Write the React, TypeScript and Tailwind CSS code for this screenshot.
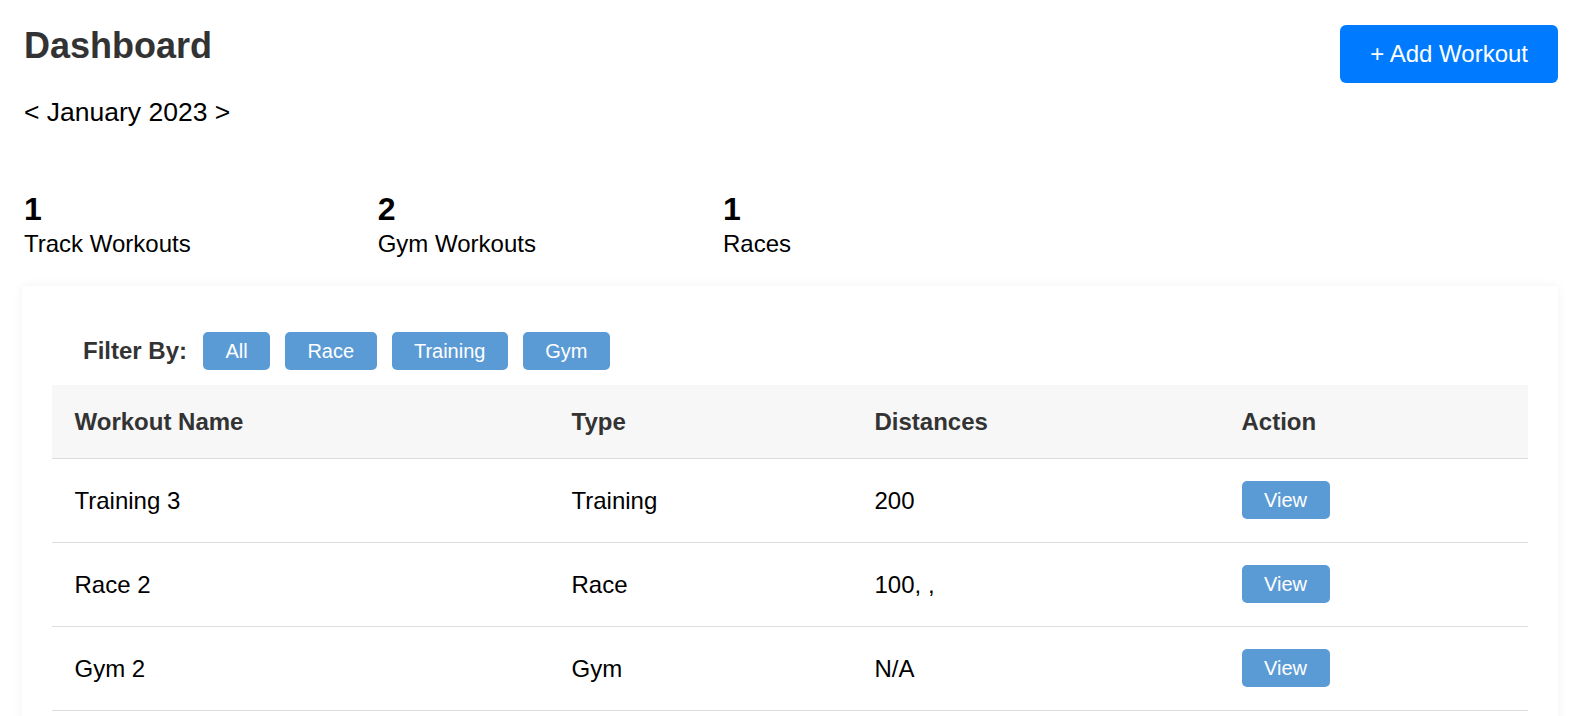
import React from "react";

const stats = [
  { count: 1, label: "Track Workouts" },
  { count: 2, label: "Gym Workouts" },
  { count: 1, label: "Races" },
];

const filters = ["All", "Race", "Training", "Gym"];

const workouts = [
  { name: "Training 3", type: "Training", distances: "200" },
  { name: "Race 2", type: "Race", distances: "100, ," },
  { name: "Gym 2", type: "Gym", distances: "N/A" },
];

export default function App() {
  return (
    <div className="min-h-screen bg-white px-[22px] pt-[25px] font-['Liberation_Sans',Arial,sans-serif]">
      {/* Header */}
      <div className="flex items-start justify-between">
        <div className="pl-[2px]">
          <h1 className="text-[36px] font-bold leading-[1.15] text-[#333]">Dashboard</h1>
          <div className="mt-[31px] text-[26.5px] leading-[1.15] text-black">&lt; January 2023 &gt;</div>
        </div>
        <button className="rounded-[6px] bg-[#007bff] px-[30px] py-[15px] text-[24px] leading-[1.15] text-white">
          + Add Workout
        </button>
      </div>

      {/* Stats */}
      <div className="mt-[63px] flex gap-[187px] pl-[2px]">
        {stats.map((s) => (
          <div key={s.label}>
            <div className="text-[32px] font-bold leading-[1.15] text-black">{s.count}</div>
            <div className="mt-[2px] text-[24px] leading-[1.15] text-black">{s.label}</div>
          </div>
        ))}
      </div>

      {/* Workouts card */}
      <div className="mt-[29px] bg-white px-[30px] pt-[46px] pb-[30px] shadow-[0_0_10px_rgba(0,0,0,0.06)]">
        <div className="flex items-center pl-[31px]">
          <span className="mr-[16px] text-[24px] font-bold leading-[1.15] text-[#333]">Filter By:</span>
          <div className="flex gap-[15px]">
            {filters.map((f) => (
              <button
                key={f}
                className="h-[38px] rounded-[5px] bg-[#5b9bd5] px-[22.4px] text-[20px] leading-[1.15] text-white"
              >
                {f}
              </button>
            ))}
          </div>
        </div>

        <table className="mt-[15px] w-full border-collapse text-left">
          <thead>
            <tr className="border-b border-[#ddd] bg-[#f7f7f7]">
              <th className="w-[497px] p-[22.5px] text-[24px] font-bold leading-[1.15] text-[#333]">Workout Name</th>
              <th className="w-[303px] p-[22.5px] text-[24px] font-bold leading-[1.15] text-[#333]">Type</th>
              <th className="w-[367px] p-[22.5px] text-[24px] font-bold leading-[1.15] text-[#333]">Distances</th>
              <th className="p-[22.5px] text-[24px] font-bold leading-[1.15] text-[#333]">Action</th>
            </tr>
          </thead>
          <tbody>
            {workouts.map((w) => (
              <tr key={w.name} className="border-b border-[#ddd]">
                <td className="p-[22.5px] align-middle text-[24px] leading-[1.15] text-black">{w.name}</td>
                <td className="p-[22.5px] align-middle text-[24px] leading-[1.15] text-black">{w.type}</td>
                <td className="p-[22.5px] align-middle text-[24px] leading-[1.15] text-black">{w.distances}</td>
                <td className="p-[22.5px] align-middle">
                  <button className="h-[38px] rounded-[5px] bg-[#5b9bd5] px-[22.5px] text-[20px] leading-[1.15] text-white">
                    View
                  </button>
                </td>
              </tr>
            ))}
          </tbody>
        </table>
      </div>
    </div>
  );
}
